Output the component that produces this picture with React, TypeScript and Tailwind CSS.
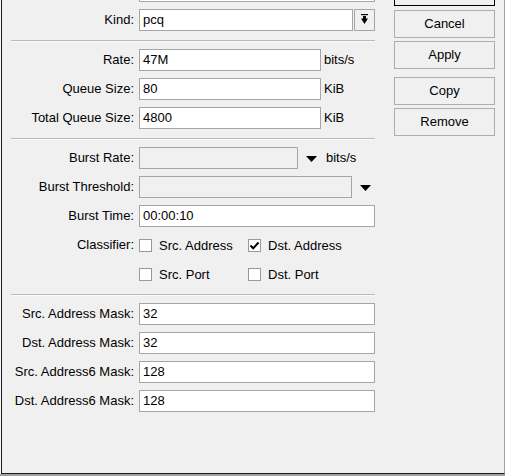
import type { ReactNode } from 'react';

function Field({ value = '', w = 'w-[236px]', disabled = false }: { value?: string; w?: string; disabled?: boolean }) {
    return (
        <div
            className={`${w} h-[22px] shrink-0 border border-[#a6a6a6] pl-[3px] flex items-center whitespace-nowrap ${disabled ? 'bg-[#f0f0f0]' : 'bg-white'}`}
        >
            {value}
        </div>
    );
}

function Row({ label, children }: { label: string; children?: ReactNode }) {
    return (
        <div className="flex items-center h-[22px]">
            <div className="w-[123px] text-right whitespace-nowrap">{label}</div>
            <div className="ml-[5px] flex items-center">{children}</div>
        </div>
    );
}

function Separator() {
    return (
        <div className="flex flex-col">
            <div className="h-px bg-[#b9b9b9]" />
            <div className="h-px bg-[#fbfbfb]" />
        </div>
    );
}

function DownTriangle() {
    return (
        <svg width="11" height="6" viewBox="0 0 11 6">
            <polygon points="0,0 11,0 5.5,6" fill="#000" />
        </svg>
    );
}

function Check({ checked = false, label }: { checked?: boolean; label: string }) {
    return (
        <div className="flex items-center">
            <div className="w-[13px] h-[13px] border border-[#9a9a9a] bg-white flex items-center justify-center">
                {checked && (
                    <svg width="11" height="11" viewBox="0 0 11 11">
                        <path d="M1.5 5.5 L4.2 8.3 L9.5 2.5" fill="none" stroke="#000" strokeWidth={2} />
                    </svg>
                )}
            </div>
            <span className="ml-[7px] whitespace-nowrap">{label}</span>
        </div>
    );
}

function Btn({ children, def = false }: { children?: ReactNode; def?: boolean }) {
    return (
        <div
            className={`h-[28px] w-[101px] flex items-center justify-center border bg-[#f0f0f0] ${def ? 'border-black' : 'border-[#adadad]'}`}
        >
            {children}
        </div>
    );
}

export default function App() {
    return (
        <div className="w-[505px] h-[476px] flex flex-col overflow-hidden bg-white text-[13px] text-black font-['Liberation_Sans',Arial,sans-serif]">
            <div className="h-[474px] flex">
                <div className="w-px bg-[#f7f7f7]" />
                <div className="flex-1 flex bg-[#f0f0f0] border-l border-b border-r border-l-[#1e1e1e] border-b-[#1e1e1e] border-r-[#a0a0a0]">
                    {/* form */}
                    <div className="ml-[9px] w-[364px] flex flex-col">
                        <div className="-mt-[20px] flex flex-col gap-[7px]">
                            <Row label="">
                                <Field />
                            </Row>
                            <Row label="Kind:">
                                <Field value="pcq" w="w-[214px]" />
                                <div className="ml-px w-[21px] h-[22px] border border-[#a6a6a6] bg-[#f0f0f0] flex items-center justify-center">
                                    <svg width="7" height="10" viewBox="0 0 7 10" className="-mt-[2px] -ml-px">
                                        <rect x="0" y="0" width="7" height="1.2" fill="#000" />
                                        <rect x="2" y="2" width="3" height="3" fill="#000" />
                                        <polygon points="0,4.5 7,4.5 3.5,10" fill="#000" />
                                    </svg>
                                </div>
                            </Row>
                        </div>

                        <div className="mt-[9px] mb-[7px]">
                            <Separator />
                        </div>

                        <div className="flex flex-col gap-[7px]">
                            <Row label="Rate:">
                                <Field value="47M" w="w-[182px]" />
                                <span className="ml-[3px]">bits/s</span>
                            </Row>
                            <Row label="Queue Size:">
                                <Field value="80" w="w-[182px]" />
                                <span className="ml-[3px]">KiB</span>
                            </Row>
                            <Row label="Total Queue Size:">
                                <Field value="4800" w="w-[182px]" />
                                <span className="ml-[3px]">KiB</span>
                            </Row>
                        </div>

                        <div className="mt-[9px] mb-[7px]">
                            <Separator />
                        </div>

                        <div className="flex flex-col gap-[7px]">
                            <Row label="Burst Rate:">
                                <Field w="w-[159px]" disabled />
                                <span className="ml-[8px] mt-px">
                                    <DownTriangle />
                                </span>
                                <span className="ml-[9px]">bits/s</span>
                            </Row>
                            <Row label="Burst Threshold:">
                                <Field w="w-[213px]" disabled />
                                <span className="ml-[8px] mt-px">
                                    <DownTriangle />
                                </span>
                            </Row>
                            <Row label="Burst Time:">
                                <Field value="00:00:10" />
                            </Row>
                            <Row label="Classifier:">
                                <div className="w-[109px] mt-px">
                                    <Check label="Src. Address" />
                                </div>
                                <div className="mt-px">
                                    <Check checked label="Dst. Address" />
                                </div>
                            </Row>
                            <Row label="">
                                <div className="w-[109px] mt-px">
                                    <Check label="Src. Port" />
                                </div>
                                <div className="mt-px">
                                    <Check label="Dst. Port" />
                                </div>
                            </Row>
                        </div>

                        <div className="mt-[9px] mb-[7px]">
                            <Separator />
                        </div>

                        <div className="flex flex-col gap-[7px]">
                            <Row label="Src. Address Mask:">
                                <Field value="32" />
                            </Row>
                            <Row label="Dst. Address Mask:">
                                <Field value="32" />
                            </Row>
                            <Row label="Src. Address6 Mask:">
                                <Field value="128" />
                            </Row>
                            <Row label="Dst. Address6 Mask:">
                                <Field value="128" />
                            </Row>
                        </div>
                    </div>

                    {/* buttons; the default one is scrolled above the top edge */}
                    <div className="ml-[19px] flex flex-col">
                        <div className="-mt-[22px]">
                            <Btn def />
                        </div>
                        <div className="mt-[4px] flex flex-col gap-[3px]">
                            <Btn>Cancel</Btn>
                            <Btn>Apply</Btn>
                        </div>
                        <div className="mt-[8px] flex flex-col gap-[3px]">
                            <Btn>Copy</Btn>
                            <Btn>Remove</Btn>
                        </div>
                    </div>
                </div>
            </div>
            <div className="h-[2px] bg-[#a0a0a0]" />
        </div>
    );
}
